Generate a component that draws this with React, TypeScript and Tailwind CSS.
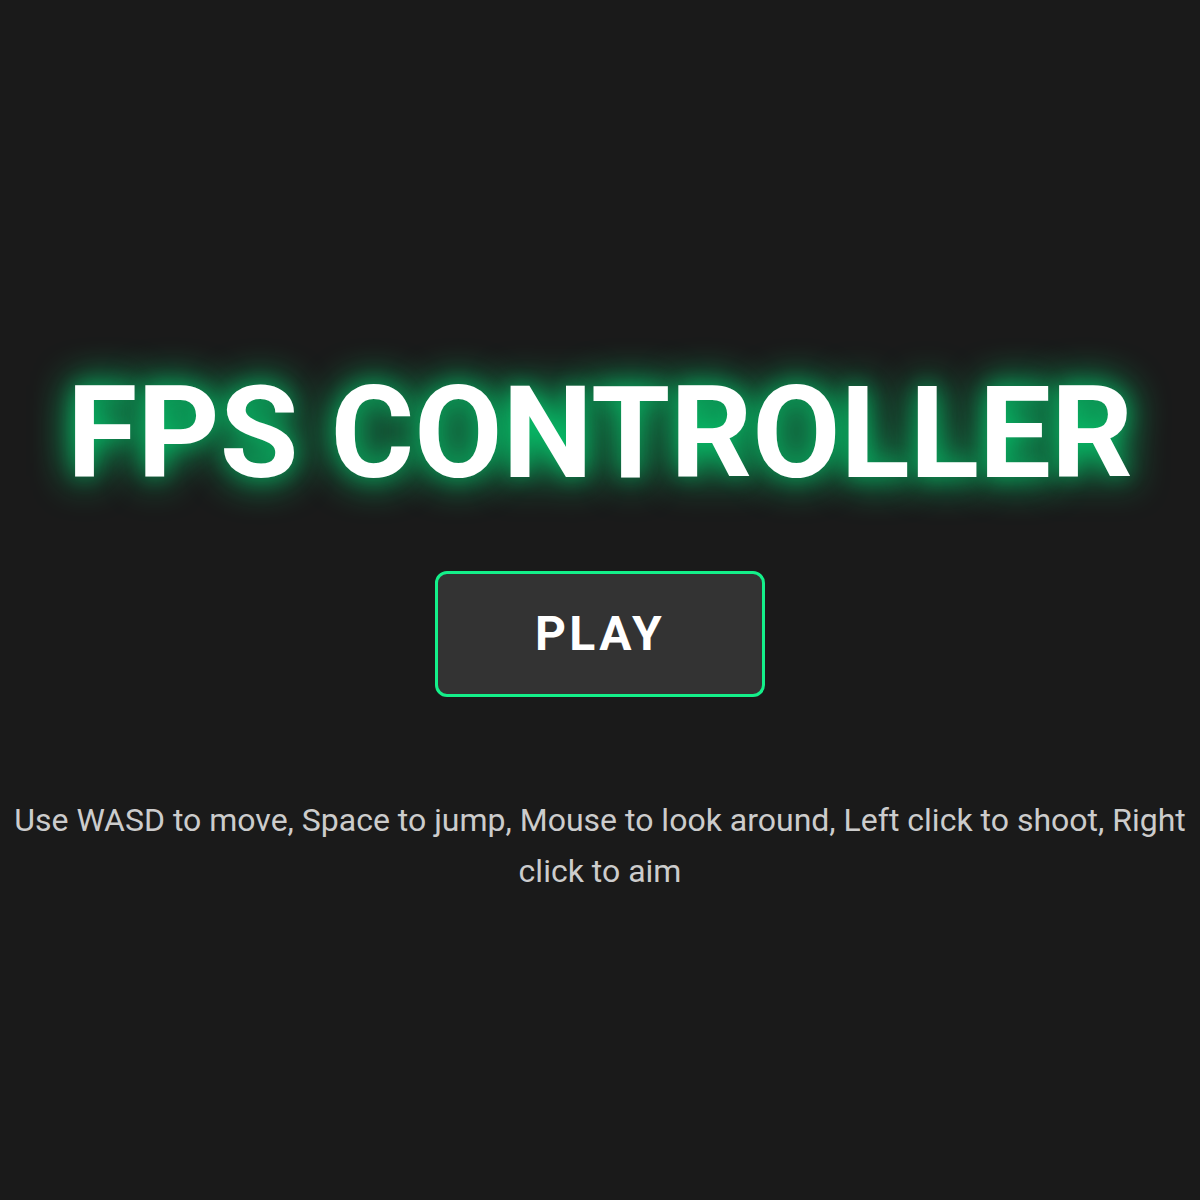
import React from "react";

export default function App() {
  return (
    <div className="w-full min-h-screen bg-[#1a1a1a] flex flex-col items-center justify-center text-center pt-[54px]" style={{ fontFamily: "Roboto, 'Liberation Sans', sans-serif" }}>
      <h1 className="text-[128px] font-bold leading-[1.2] text-white m-0 [text-shadow:0_0_40px_#00ff88,0_0_20px_rgba(0,255,136,0.3)]">
        FPS CONTROLLER
      </h1>
      <button className="mt-[60px] w-[330px] h-[126px] bg-[#333333] border-[3px] border-[#14f08a] rounded-[12px] text-white text-[48px] font-bold tracking-[3.5px]">
        PLAY
      </button>
      <p className="mt-[98px] text-[32px] leading-[1.6] text-[#cccccc]">
        Use WASD to move, Space to jump, Mouse to look around, Left click to shoot, Right click to aim
      </p>
    </div>
  );
}
